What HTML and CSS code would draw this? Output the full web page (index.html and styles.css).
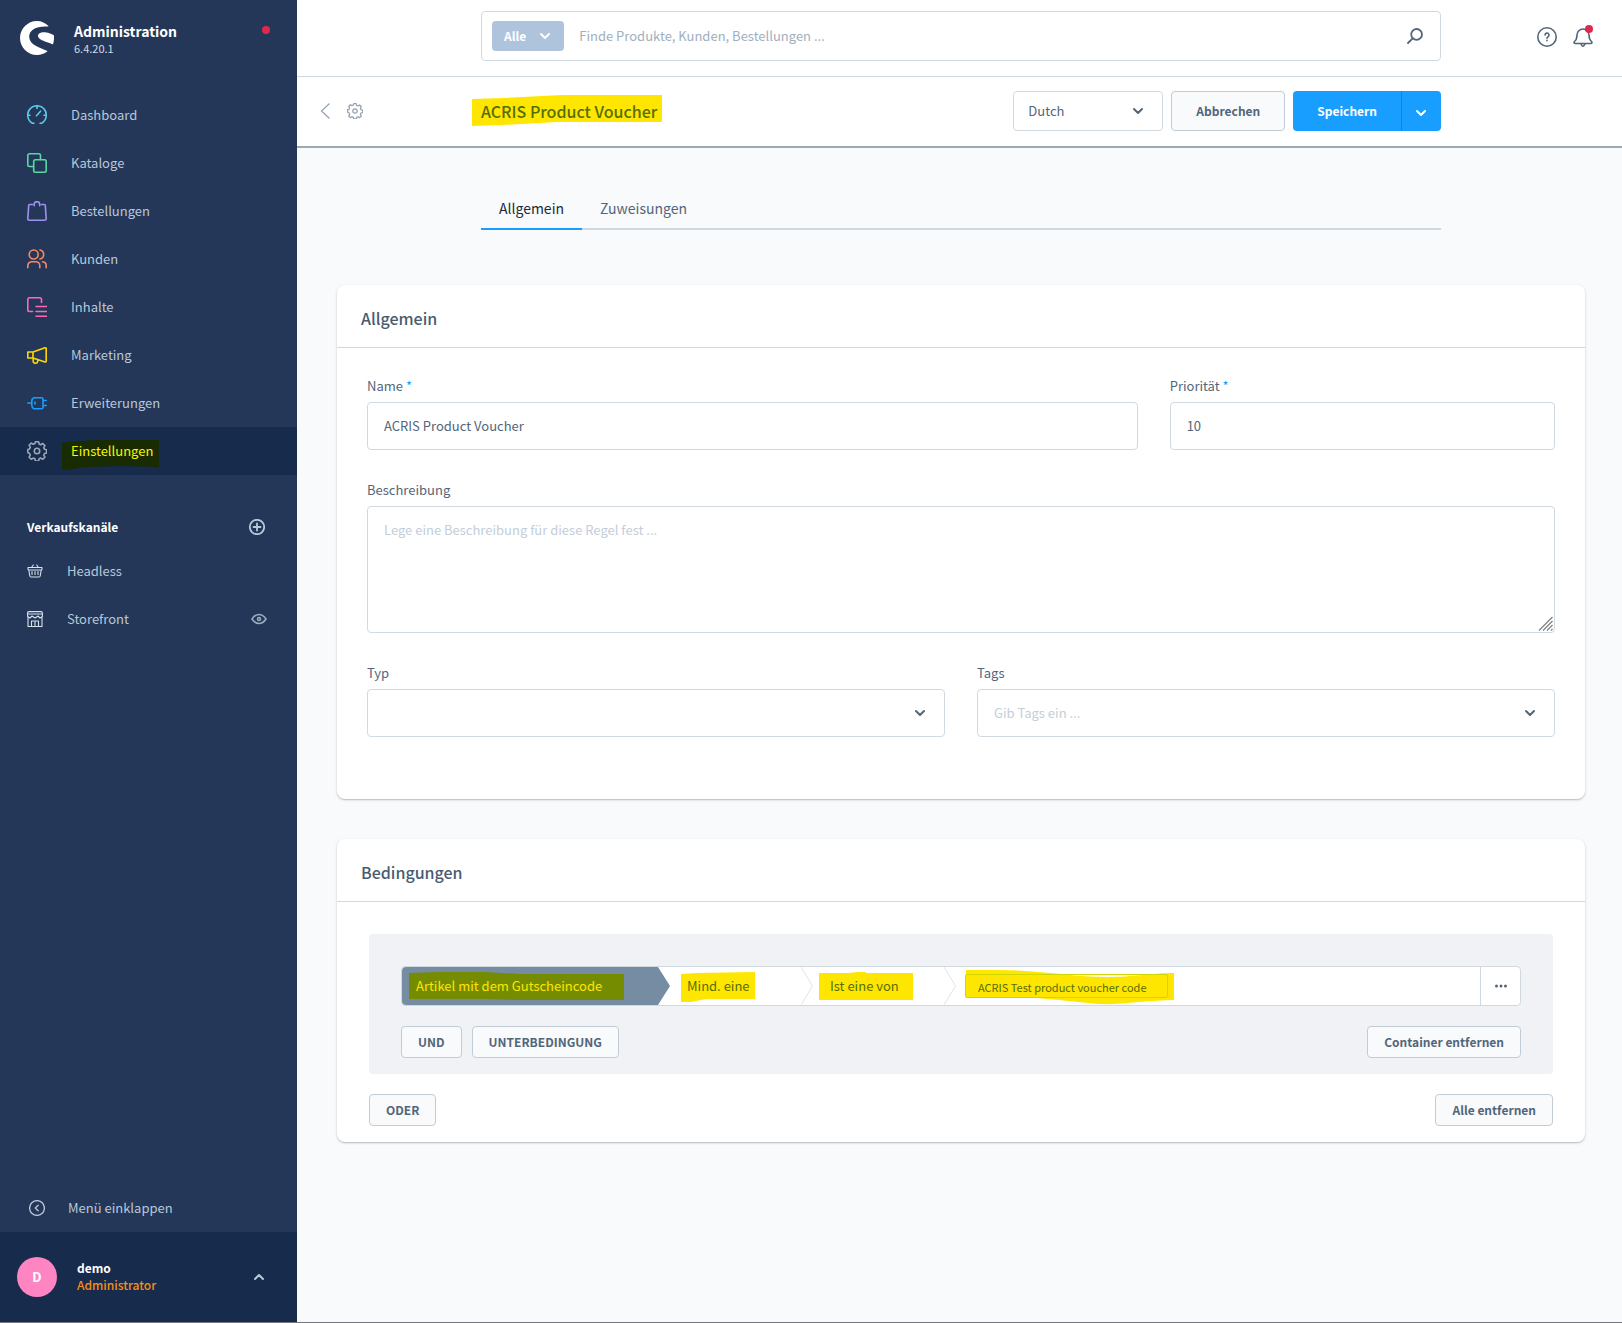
FILE: index.html
```html
<!DOCTYPE html>
<html lang="de">
<head>
<meta charset="utf-8">
<meta name="viewport" content="width=device-width, initial-scale=1">
<title>ACRIS Product Voucher | Administration</title>
<link rel="stylesheet" href="styles.css">
</head>
<body>
<svg class="sprite" aria-hidden="true">
  <symbol id="chevron" viewBox="0 0 12 12"><path d="M2 4l4 4 4-4" fill="none" stroke="currentColor" stroke-width="2" stroke-linecap="round" stroke-linejoin="round"/></symbol>
  <symbol id="gear" viewBox="0 0 20 20"><g fill="none" stroke="currentColor" stroke-linejoin="round"><circle cx="10" cy="10" r="2.7"/><path d="M8.4 .8h3.2l.5 2.2 1.7.7 2-1.2 2.100 2.100-1.200 2 .7 1.700 2.200.5v3.200l-2.200.5-.7 1.700 1.200 2-2.100 2.100-2-1.200-1.700.7-.5 2.200H8.400l-.5-2.200-1.700-.7-2 1.200-2.100-2.100 1.200-2-.7-1.700L.8 11.600V8.400L2.600 7.900l.7-1.700-1.200-2 2.100-2.100 2 1.200 1.700-.7z"/></g></symbol>
</svg>
<div class="app">
  <aside class="sidebar">
    <div class="brand">
      <svg class="brand-logo" viewBox="0 0 34 34"><path fill="#fff" d="M28.500 4.900C25.500 2.100 21.500 0 17 0 7.600 0 0 7.600 0 17s7.600 17 17 17c3.900 0 7.400-1.300 10.200-3.500.3-.3.2-.6-.2-.8C20.500 27 9.500 24 9.200 16 9 8.800 16.500 4.700 27.900 5.500c.6 0 .8-.3.6-.6zM33.800 14.300c-1.900-1.500-6.700-3.300-11.200-3.100-3.100.2-4.700 1.900-4.600 3.700.4 4.600 9.200 5.500 14.300 8.300.4.2.7.1.8-.3.800-2.800 1.100-5.500.9-8 0-.3-.1-.500-.2-.6z"/></svg>
      <div class="brand-text">
        <strong class="brand-name">Administration</strong>
        <span class="brand-version">6.4.20.1</span>
      </div>
      <span class="brand-status"></span>
    </div>

    <nav class="menu">
      <a class="menu-item" href="#"><svg class="icon-20 c-dash" viewBox="0 0 20 20"><path d="M7 18.200H5.500A9.300 9.300 0 1 1 14.500 18.200H13M10 1v2.500M1 10.200h2M17 10.200h2M9.500 10.700l4-4.500"/></svg>Dashboard</a>
      <a class="menu-item" href="#"><svg class="icon-20 c-cat" viewBox="0 0 20 20"><path d="M6.500 13.500h-4A1.700 1.700 0 0 1 .8 11.800V2.500A1.700 1.700 0 0 1 2.500.8h9.300a1.700 1.700 0 0 1 1.700 1.700V6.500"/><rect x="6.700" y="6.700" width="12.500" height="12.500" rx="1.700"/></svg>Kataloge</a>
      <a class="menu-item" href="#"><svg class="icon-20 c-order" viewBox="0 0 20 20"><path d="M5.500 3.500H2.700a1 1 0 0 0-1 1L.8 17.500a1.700 1.700 0 0 0 1.700 1.700h15a1.700 1.700 0 0 0 1.700-1.700L18.300 4.500a1 1 0 0 0-1-1H14.500M7.200 4.800V3.500a2.700 2.700 0 0 1 5.500 0V4.800"/></svg>Bestellungen</a>
      <a class="menu-item" href="#"><svg class="icon-20 c-cust" viewBox="0 0 20 20"><circle cx="6.700" cy="5.500" r="4.500"/><path d="M.8 18.700v-2a4 4 0 0 1 4-4h4a4 4 0 0 1 4 4v2M13 1a4.600 4.600 0 0 1 0 9M15.500 12.800a4 4 0 0 1 3.700 4v1.900"/></svg>Kunden</a>
      <a class="menu-item" href="#"><svg class="icon-20 c-cont" viewBox="0 0 20 20"><path d="M5.500 14.500h-3A1.700 1.700 0 0 1 .8 12.800V2.500A1.700 1.700 0 0 1 2.500.8h10.300a1.700 1.700 0 0 1 1.700 1.700V5.500M9 9.500h10.500M9 14.500h10.500M9 19.200h10.500"/></svg>Inhalte</a>
      <a class="menu-item" href="#"><svg class="icon-20 c-mark" viewBox="0 0 20 20"><path d="M6 7l12-4.200q1.200-.3 1.200.8v12.500q0 1.200-1.200.9L6 13zM6 7H.8v6H6M6.200 13.200v2.300a2 2 0 0 0 4.500.8v-1.500"/></svg>Marketing</a>
      <a class="menu-item" href="#"><svg class="icon-20 c-ext" viewBox="0 0 20 20"><path d="M.8 10h4M7 4.700h7.500a1.500 1.500 0 0 1 1.500 1.500v8a1.500 1.500 0 0 1-1.500 1.500H7q-2.200-1-2.200-3.500V8Q4.800 5.500 7 4.700zM16 7.500h3.200M16 12.500h3.200M8 9v2"/></svg>Erweiterungen</a>
      <a class="menu-item is-active" href="#"><svg class="icon-20 c-set"><use href="#gear"/></svg><span class="marked marked-nav"><svg class="marker" viewBox="0 0 98 30" preserveAspectRatio="none"><path d="M0 3L7 2 34 0H97v26h1v1l-38-1-38 1-17 3H0z"/></svg>Einstellungen</span></a>
    </nav>

    <section class="channels">
      <div class="channels-head">
        <h2 class="channels-title">Verkaufskanäle</h2>
        <button class="icon-button" aria-label="Verkaufskanal hinzufügen"><svg class="icon-16" viewBox="0 0 16 16"><circle cx="8" cy="8" r="7.200"/><path d="M8 4.500v7M4.500 8h7"/></svg></button>
      </div>
      <a class="channel" href="#"><svg class="icon-16 thin" viewBox="0 0 16 16"><path d="M1 4.500h14v1.800q0 .7-1 .7H2Q1 7 1 6.300zM1.800 7l1 6q.2 1 1.200 1h8q1 0 1.200-1l1-6M5 8.500v3M8 8.500v3M11 8.500v3M4.500 4.500l1.800-2.500M11.500 4.500L9.700 2"/></svg>Headless</a>
      <a class="channel" href="#"><svg class="icon-16 thin" viewBox="0 0 16 16"><path d="M2 .6h12q1.400 0 1.400 1.400v3.500L13 7l-2-2-3 2-3-2-2 2L.6 5.500V2Q.6.600 2 .6zM1 6.500v9h14v-9M4.500 15.500v-5.500h7v5.500M8 10v5.500M.6 3h14.800"/></svg>Storefront
        <svg class="channel-eye" viewBox="0 0 16 12"><path d="M1 6q3-4.500 7-4.500T15 6q-3 4.500-7 4.500T1 6z"/><circle cx="8" cy="6" r="1.500"/></svg></a>
    </section>

    <div class="sidebar-foot">
      <button class="collapse"><svg class="icon-16 collapse-icon" viewBox="0 0 16 16"><circle cx="8" cy="8" r="7.400"/><path d="M9.200 5.200L6.300 8l2.900 2.800"/></svg>Menü einklappen</button>
      <button class="user">
        <span class="avatar">D</span>
        <span class="user-text"><span class="user-name">demo</span><span class="user-role">Administrator</span></span>
        <svg class="chevron chevron-up"><use href="#chevron"/></svg>
      </button>
    </div>
  </aside>

  <div class="main">
    <header class="topbar">
      <form class="search">
        <button type="button" class="search-type">Alle<svg class="chevron"><use href="#chevron"/></svg></button>
        <input class="search-input" type="text" aria-label="Suche" placeholder="Finde Produkte, Kunden, Bestellungen ...">
        <button type="button" class="icon-button" aria-label="Suchen"><svg class="icon-16" viewBox="0 0 16 16"><circle cx="9.600" cy="6.400" r="5.400"/><path d="M5.700 10.300L1 15"/></svg></button>
      </form>
      <div class="topbar-tools">
        <button class="icon-button" aria-label="Hilfe"><svg class="icon-20" viewBox="0 0 20 20"><circle cx="10" cy="10" r="9.200"/><path d="M8 8a2 2 0 1 1 2.800 1.900q-.8.300-.8 1.300M10 13.300v.4"/></svg></button>
        <button class="icon-button bell" aria-label="Benachrichtigungen"><svg class="icon-20" viewBox="0 0 20 20"><path d="M4 8a6 6 0 0 1 12 0q0 4.500 2.500 6.500 1.200 1.800-.5 2H2q-1.700-.2-.5-2Q4 12.500 4 8zM8 17q2 4.500 4 0"/></svg><span class="bell-dot"></span></button>
      </div>
    </header>

    <div class="pagehead">
      <div class="pagehead-back">
        <a class="back" href="#" aria-label="Zurück"><svg viewBox="0 0 10 16"><path d="M9 .5L1 8l8 7.500"/></svg></a>
        <svg class="module-icon" viewBox="0 0 16 16"><use href="#gear"/></svg>
      </div>
      <div class="pagehead-content">
        <h1 class="page-title"><span class="marked marked-title"><svg class="marker" viewBox="0 0 190 31" preserveAspectRatio="none"><path d="M0 4L32 3 90 0H190V27H85L30 30 0 31z"/></svg>ACRIS Product Voucher</span></h1>
        <div class="actions">
          <div class="select-wrap language">
            <select class="control" aria-label="Sprache"><option>Dutch</option></select>
            <svg class="chevron"><use href="#chevron"/></svg>
          </div>
          <button class="button">Abbrechen</button>
          <div class="split">
            <button class="button-primary">Speichern</button>
            <button class="button-primary split-more" aria-label="Weitere Aktionen"><svg class="chevron"><use href="#chevron"/></svg></button>
          </div>
        </div>
      </div>
    </div>

    <main class="content">
      <nav class="tabs">
        <a class="tab is-active" href="#">Allgemein</a>
        <a class="tab" href="#">Zuweisungen</a>
      </nav>

      <section class="card">
        <h2 class="card-title">Allgemein</h2>
        <div class="card-body form">
          <div class="form-row wide-narrow">
            <div class="field">
              <label class="label" for="name">Name <span class="required">*</span></label>
              <input class="control" id="name" type="text" value="ACRIS Product Voucher">
            </div>
            <div class="field">
              <label class="label" for="priority">Priorität <span class="required">*</span></label>
              <input class="control" id="priority" type="text" value="10">
            </div>
          </div>
          <div class="field">
            <label class="label" for="description">Beschreibung</label>
            <div class="textarea-wrap">
              <textarea class="control" id="description" placeholder="Lege eine Beschreibung für diese Regel fest ..."></textarea>
              <svg class="grip" viewBox="0 0 15 15"><path d="M1 14.500L14.500 1M5 14.500L14.500 5M9 14.500L14.500 9M13 14.500l1.500-1.500"/></svg>
            </div>
          </div>
          <div class="form-row">
            <div class="field">
              <label class="label" for="type">Typ</label>
              <div class="select-wrap">
                <select class="control" id="type"><option></option></select>
                <svg class="chevron"><use href="#chevron"/></svg>
              </div>
            </div>
            <div class="field">
              <label class="label" for="tags">Tags</label>
              <div class="select-wrap">
                <input class="control" id="tags" type="text" placeholder="Gib Tags ein ...">
                <svg class="chevron"><use href="#chevron"/></svg>
              </div>
            </div>
          </div>
        </div>
      </section>

      <section class="card">
        <h2 class="card-title">Bedingungen</h2>
        <div class="card-body conditions">
          <div class="group">
            <div class="condition">
              <div class="part part-type"><span class="marked marked-slate"><svg class="marker" viewBox="0 0 215 28" preserveAspectRatio="none"><path d="M0 1L30 0H75L110 2H215V28H110L75 27H0z"/></svg>Artikel mit dem Gutscheincode</span>
                <svg class="arrow arrow-solid" viewBox="0 0 12 38"><path d="M0 0l12 19L0 38z"/></svg></div>
              <div class="part"><span class="marked marked-any"><svg class="marker" viewBox="0 0 74 30" preserveAspectRatio="none"><path d="M0 2L15 1 74 0V27H25L10 30H0z"/></svg>Mind. eine</span>
                <svg class="arrow" viewBox="0 0 12 38"><path d="M0 0l11.500 19L0 38"/></svg></div>
              <div class="part"><span class="marked marked-one"><svg class="marker" viewBox="0 0 94 28" preserveAspectRatio="none"><path d="M0 1H30L38 0H47V1H94V28H0z"/></svg>Ist eine von</span>
                <svg class="arrow" viewBox="0 0 12 38"><path d="M0 0l11.500 19L0 38"/></svg></div>
              <div class="part part-value"><span class="marked marked-code"><svg class="marker" viewBox="0 0 209 35" preserveAspectRatio="none"><path d="M0 0H30C75 0 110 7 140 7S185 3 209 3V30C185 30 155 35 135 34S75 27 45 27H0z"/></svg>ACRIS Test product voucher code</span></div>
              <button class="more" aria-label="Mehr"><svg viewBox="0 0 12 4"><circle cx="1.500" cy="2" r="1.500"/><circle cx="6" cy="2" r="1.500"/><circle cx="10.500" cy="2" r="1.500"/></svg></button>
            </div>
            <div class="button-row">
              <button class="button small">UND</button>
              <button class="button small">UNTERBEDINGUNG</button>
              <button class="button small push">Container entfernen</button>
            </div>
          </div>
          <div class="button-row">
            <button class="button small">ODER</button>
            <button class="button small push">Alle entfernen</button>
          </div>
        </div>
      </section>
    </main>
  </div>
</div>
</body>
</html>
```
FILE: styles.css
```css
* { box-sizing: border-box; }

body {
  margin: 0;
  background: #f9fafc;
  color: #52667a;
  font: 13px/20px "Noto Sans CJK SC", "Noto Sans", sans-serif;
}

a { color: inherit; text-decoration: none; }
h1, h2 { margin: 0; }
button, input, select, textarea { font: inherit; color: inherit; }
button { padding: 0; border: 0; background: none; cursor: pointer; }
svg { flex: none; fill: none; stroke: currentColor; }

.sprite { position: absolute; width: 0; height: 0; }
.icon-20 { width: 20px; height: 20px; stroke-width: 1.6; stroke-linecap: round; stroke-linejoin: round; }
.icon-16 { width: 16px; height: 16px; stroke-width: 1.8; stroke-linecap: round; stroke-linejoin: round; }
.thin { stroke-width: 1.1; }
.collapse-icon { stroke-width: 1.3; }
.chevron { width: 12px; height: 12px; }
.chevron-up { transform: rotate(180deg); }
.icon-button { display: flex; position: relative; }

.app {
  display: grid;
  grid-template-columns: 297px minmax(0, 1fr);
  min-height: 100vh;
  border-bottom: 1px solid #74777c;
}

/* Sidebar */
.sidebar { display: flex; flex-direction: column; background: #243758; color: #b8c8da; }
.brand { display: flex; align-items: flex-start; height: 91px; padding: 21px 27px 0 20px; }
.brand-logo { width: 34px; height: 34px; stroke: none; }
.brand-text { display: flex; flex-direction: column; margin-left: 20px; }
.brand-name { color: #fff; font-size: 14px; line-height: 20px; }
.brand-version { font-size: 11px; line-height: 14px; color: #d0dae4; }
.brand-status { width: 8px; height: 8px; margin: 5px 0 0 auto; border-radius: 50%; background: #de294c; }

.menu-item { display: flex; align-items: center; gap: 24px; height: 48px; padding: 0 27px; }
.menu-item.is-active { background: #172b4d; }
.c-dash { color: #5cc8e8; }
.c-cat { color: #57d9a3; }
.c-order { color: #a092f0; }
.c-cust { color: #f88962; }
.c-cont { color: #ff68b4; }
.c-mark { color: #ffd700; }
.c-ext { color: #189eff; }
.c-set { color: #9aa8b5; }

.channels { margin-top: 40px; }
.channels-head { display: flex; align-items: center; justify-content: space-between; height: 24px; padding: 0 32px 0 27px; margin-bottom: 8px; }
.channels-title { color: #fff; font-size: 12px; line-height: 20px; }
.channel { display: flex; align-items: center; gap: 24px; height: 48px; padding: 0 30px 0 27px; }
.channel .icon-16 { color: #d8e2ec; }
.channel-eye { width: 16px; height: 12px; margin-left: auto; color: #9aacbe; stroke-width: 1.6; }

.sidebar-foot { margin-top: auto; }
.collapse { display: flex; align-items: center; gap: 23px; width: 100%; height: 48px; padding: 0 29px; }
.user { display: flex; align-items: center; width: 100%; height: 90px; padding: 0 32px 0 17px; background: #172b4d; text-align: left; }
.avatar { width: 40px; height: 40px; border-radius: 50%; background: #ff85c2; color: #fff; font-weight: 700; line-height: 40px; text-align: center; }
.user-text { display: flex; flex-direction: column; margin: 0 auto 0 20px; padding-bottom: 2px; font-size: 12px; font-weight: 700; line-height: 17px; }
.user-name { color: #fff; }
.user-role { color: #f88e13; font-weight: 500; }

/* Top bar and page head */
.topbar, .pagehead {
  display: grid;
  grid-template-columns: 1fr minmax(0, 960px) 1fr;
  align-items: center;
  padding-left: 3px;
  background: #fff;
}
.topbar { height: 77px; border-bottom: 1px solid #d1d9e0; padding-bottom: 4px; }
.search { grid-column: 2; display: flex; align-items: center; height: 50px; padding: 0 17px 0 10px; border: 1px solid #d1d9e0; border-radius: 4px; }
.search-type { display: flex; align-items: center; gap: 13px; height: 30px; padding: 0 13px 0 12px; border-radius: 4px; background: #aec4dc; color: #fff; font-size: 12px; font-weight: 700; }
.search-input { flex: 1; min-width: 0; padding: 0 15px; border: 0; outline: 0; background: none; }
.search-input::placeholder { color: #9fafbd; opacity: 1; }
.topbar-tools { display: flex; justify-content: flex-end; gap: 16px; padding: 2px 29px 0 0; }
.bell-dot { position: absolute; top: -2px; right: 0; width: 8px; height: 8px; border-radius: 50%; background: #de294c; }

.pagehead { height: 71px; padding-bottom: 1px; border-bottom: 2px solid #9aa8b7; }
.pagehead-back { display: flex; align-items: center; gap: 16px; padding-left: 20px; color: #93a3b3; }
.back { display: flex; }
.back svg { width: 11px; height: 16px; stroke-width: 1.2; }
.module-icon { width: 16px; height: 16px; stroke-width: 1.6; }
.pagehead-content { display: flex; align-items: center; justify-content: space-between; }
.page-title { padding-bottom: 1px; font-size: 16px; font-weight: 500; line-height: 24px; }
.actions { display: flex; gap: 8px; }
.language { width: 150px; }
.language .control { height: 40px; padding: 0 14px; }
.split { display: flex; }
.button-primary { height: 40px; padding: 0 24px; border-radius: 4px 0 0 4px; background: #189eff; color: #fff; font-size: 12px; font-weight: 700; }
.split-more { display: flex; align-items: center; width: 40px; padding: 4px 13px 0; border-left: 1px solid #1283d6; border-radius: 0 4px 4px 0; }

.button { height: 40px; padding: 0 24px; border: 1px solid #c2ccd6; border-radius: 4px; background: #f9fafc; font-size: 12px; font-weight: 700; }
.button.small { height: 32px; padding: 0 16px; }
.button-row { display: flex; gap: 10px; }
.push { margin-left: auto; }

/* Content */
.content { padding: 40px 37px 40px 40px; }
.tabs { display: flex; max-width: 960px; height: 42px; margin: 0 auto 55px; border-bottom: 2px solid #d1d9e0; font-size: 14px; }
.tab { height: 42px; padding: 10px 18px 0; }
.tab.is-active { border-bottom: 2px solid #189eff; color: #1a2a3a; }

.card { margin-bottom: 40px; border-radius: 8px; background: #fff; box-shadow: 0 1px 1px rgba(0, 0, 0, .12), 0 1px 3px rgba(0, 0, 0, .16); }
.card-title { padding: 21px 24px 17px; border-bottom: 1px solid #d1d9e0; font-size: 16px; font-weight: 500; line-height: 24px; color: #475c71; }
.form { display: grid; gap: 30px; padding: 28px 30px 62px; }
.form-row { display: grid; grid-template-columns: 1fr 1fr; gap: 32px; }
.wide-narrow { grid-template-columns: 2fr 1fr; }
.label { display: block; margin-bottom: 6px; }
.required { color: #189eff; }
.control { display: block; width: 100%; height: 48px; padding: 0 16px 2px; border: 1px solid #d1d9e0; border-radius: 4px; outline: 0; background: #fff; appearance: none; }
.control::placeholder { color: #c3ced9; opacity: 1; }
textarea.control { height: 127px; padding: 13px 16px; resize: none; }
.textarea-wrap, .select-wrap { position: relative; display: grid; align-items: center; }
.select-wrap .chevron { position: absolute; right: 19px; pointer-events: none; }
.grip { position: absolute; right: 2px; bottom: 2px; width: 15px; height: 15px; color: #808080; stroke-width: 1.2; }

/* Conditions */
.conditions { display: grid; gap: 20px; padding: 32px 32px 16px; }
.group { display: grid; gap: 20px; padding: 32px 32px 16px; border-radius: 4px; background: #f0f2f5; }
.condition { display: grid; grid-template-columns: 256px 143px 143px minmax(0, 1fr) 40px; height: 40px; border: 1px solid #d1d9e0; border-radius: 4px; background: #fff; }
.part { position: relative; display: flex; align-items: center; padding-left: 29px; white-space: nowrap; }
.part-type { padding-left: 14px; border-radius: 4px 0 0 4px; background: #758ca3; }
.part-value { padding-left: 21px; }
.arrow { position: absolute; left: 100%; top: 0; width: 12px; height: 38px; color: #dfe5ea; }
.arrow-solid { fill: #758ca3; stroke: none; }
.more { display: grid; place-items: center; border-left: 1px solid #d1d9e0; }
.more svg { width: 12px; height: 4px; fill: #52667a; stroke: none; }

/* Highlighter strokes lie behind the text they mark */
.marked { position: relative; z-index: 0; color: #566e00; }
.marker { position: absolute; z-index: -1; fill: #ffe600; stroke: none; }
.marked-title .marker { left: -9px; top: -4px; width: 190px; height: 31px; }
.marked-nav { color: #f7f700; }
.marked-nav .marker { left: -9px; top: -1px; width: 98px; height: 30px; fill: #192b00; }
.marked-slate { color: #ffe600; }
.marked-slate .marker { left: -7px; top: -4px; width: 215px; height: 28px; fill: #758c00; }
.marked-any .marker { left: -6px; top: -4px; width: 74px; height: 30px; }
.marked-one .marker { left: -11px; top: -4px; width: 94px; height: 28px; }
.marked-code { width: 203px; height: 24px; padding-left: 13px; font-size: 11px; line-height: 26px; }
.marked-code::after { content: ""; position: absolute; inset: 0; border: 1px solid #cfd600; border-radius: 2px; }
.marked-code .marker { left: 1px; top: -4px; width: 208px; height: 35px; }
```
